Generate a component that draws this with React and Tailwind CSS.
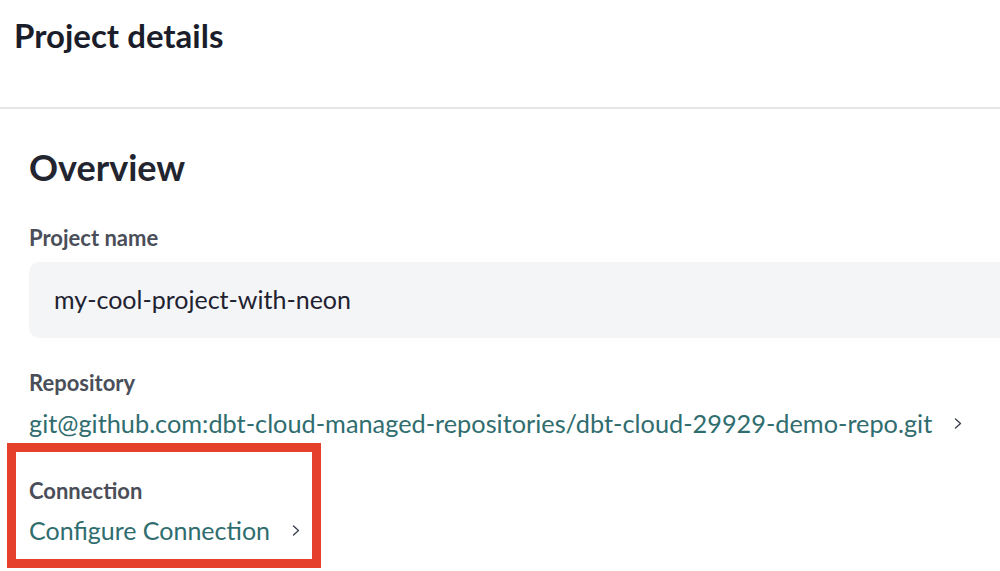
import React from "react";

function Chevron({ className }) {
  return (
    <svg viewBox="0 0 10 14" className={className} fill="none" stroke="currentColor" strokeWidth="1.4" strokeLinecap="round" strokeLinejoin="round">
      <path d="M2.5 2.5 L7.5 7 L2.5 11.5" />
    </svg>
  );
}

export default function App() {
  return (
    <div className="w-[1000px] h-[571px] overflow-hidden bg-white font-['Lato',sans-serif]">
      <div className="h-[109px] border-b-2 border-[#e6e6e6] pl-[14px] pt-[14px]">
        <h1 className="text-[33px] leading-[42px] font-bold text-[#1b1e2a]">Project details</h1>
      </div>
      <div className="pl-[29px] pt-[35px]">
        <h2 className="text-[36px] leading-[46px] font-bold text-[#22252f]">Overview</h2>
        <div className="mt-[34px] text-[22px] leading-[28px] font-bold text-[#4a4e59]">Project name</div>
        <div className="mt-[10px] h-[76px] rounded-l-[10px] bg-[#f3f5f7] pl-[25px] flex items-center">
          <span className="text-[25px] text-[#1f2230]">my-cool-project-with-neon</span>
        </div>
        <div className="mt-[31px] text-[22px] leading-[28px] font-bold text-[#4a4e59]">Repository</div>
        <div className="mt-[10px] flex items-center gap-[21px] text-[#2f6d6f]">
          <span className="text-[25.3px] leading-[32px]">git@github.com:dbt-cloud-managed-repositories/dbt-cloud-29929-demo-repo.git</span>
          <Chevron className="w-[10px] h-[15px] text-[#3c4250]" />
        </div>
      </div>
      <div className="mt-[4px] ml-[7px] w-[314px] h-[125px] border-[9px] border-[#e4402b] pl-[13px] pt-[25px]">
        <div className="text-[22px] leading-[28px] font-bold text-[#4a4e59]">Connection</div>
        <div className="mt-[9px] flex items-center gap-[21px] text-[#2f6d6f]">
          <span className="text-[25px] leading-[32px]">Configure Connection</span>
          <Chevron className="w-[10px] h-[15px] text-[#3c4250]" />
        </div>
      </div>
    </div>
  );
}
